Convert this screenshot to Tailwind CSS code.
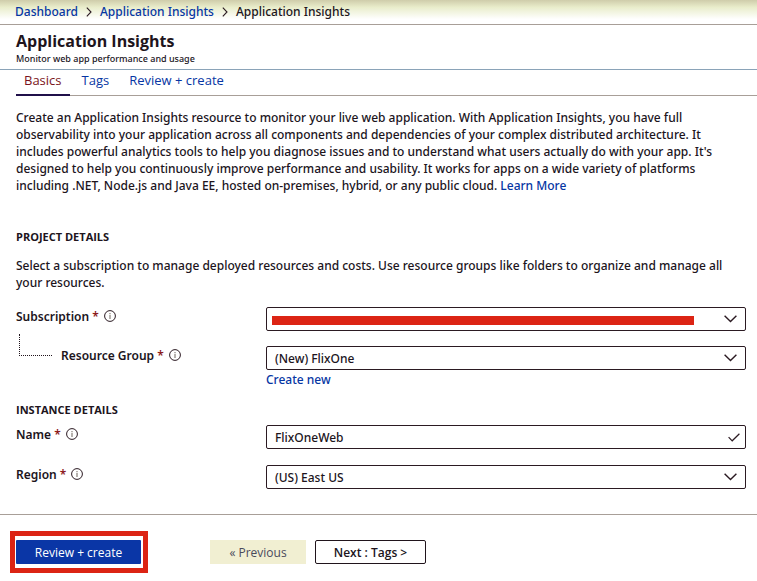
<!DOCTYPE html>
<html lang="en">
<head>
<meta charset="utf-8">
<meta name="viewport" content="width=device-width, initial-scale=1">
<title>Application Insights</title>
<script src="https://cdn.jsdelivr.net/npm/@tailwindcss/browser@4"></script>
</head>
<body class="min-h-screen bg-white font-['Noto_Sans','Open_Sans',sans-serif] text-[12px] leading-[17px] font-medium text-[#20141c]">
<svg class="hidden" aria-hidden="true">
  <symbol id="info" viewBox="0 0 12 12"><circle cx="6" cy="6" r="5.4" fill="none" stroke="#2b1a22" stroke-width="1"/><path d="M6 5v4M6 3v1.2" stroke="#8f8882" stroke-width="1.3"/></symbol>
  <symbol id="down" viewBox="0 0 13 8"><path d="M.6 .8 6.5 6.6 12.4 .8" fill="none" stroke="#2b1a22" stroke-width="1.4"/></symbol>
  <symbol id="crumb" viewBox="0 0 6 10"><path d="M.8 .6 5 5 .8 9.4" fill="none" stroke="#2b1a22" stroke-width="1.1"/></symbol>
  <symbol id="check" viewBox="0 0 12 9"><path d="M.6 4.2 4.2 7.8 11.4 .7" fill="none" stroke="#2b1a22" stroke-width="1.2"/></symbol>
</svg>

<nav aria-label="Breadcrumb" class="h-[25px] border-b border-[#a89f98] bg-linear-to-b from-[#cfccaa] via-[#e9edcb] via-30% to-white to-80% px-[15px]">
  <ol class="flex h-[23px] items-center gap-2">
    <li><a href="#" class="text-[#0636a3]">Dashboard</a></li>
    <li aria-hidden="true"><svg class="h-[10px] w-[6px]"><use href="#crumb"/></svg></li>
    <li><a href="#" class="text-[#0636a3]">Application Insights</a></li>
    <li aria-hidden="true"><svg class="h-[10px] w-[6px]"><use href="#crumb"/></svg></li>
    <li aria-current="page">Application Insights</li>
  </ol>
</nav>

<header class="h-[45px] border-b border-[#8aa3b8] px-4 pt-[5px]">
  <h1 class="font-['Open_Sans','Noto_Sans',sans-serif] text-[16px] leading-[22px] font-bold">Application Insights</h1>
  <p class="text-[9px] leading-[14px]">Monitor web app performance and usage</p>
</header>

<nav aria-label="Steps" class="ml-4 flex h-[26px] border-b border-[#a89f98] font-['Open_Sans','Noto_Sans',sans-serif] text-[13px] text-[#0636a3]">
  <a href="#" aria-current="page" class="h-[26px] border-b-2 border-[#20104a] px-2 pt-[2px] text-[#7a1420]">Basics</a>
  <a href="#" class="px-3 pt-[2px]">Tags</a>
  <a href="#" class="px-2 pt-[2px]">Review + create</a>
</nav>

<main class="pr-[11px] pl-4">
  <p class="mt-[13px] mr-5">Create an Application Insights resource to monitor your live web application. With Application Insights, you have full observability into your application across all components and dependencies of your complex distributed architecture. It includes powerful analytics tools to help you diagnose issues and to understand what users actually do with your app. It's designed to help you continuously improve performance and usability. It works for apps on a wide variety of platforms including .NET, Node.js and Java EE, hosted on-premises, hybrid, or any public cloud. <a href="#" class="text-[#0636a3]">Learn More</a></p>

  <h2 class="mt-[34px] font-['Open_Sans','Noto_Sans',sans-serif] text-[11px] font-bold">PROJECT DETAILS</h2>
  <p class="mt-3">Select a subscription to manage deployed resources and costs. Use resource groups like folders to organize and manage all your resources.</p>

  <div class="mt-4 grid grid-cols-[250px_1fr] gap-y-[15px]">
    <div class="flex h-[18px] items-center gap-[5px] font-semibold">
      <label for="subscription">Subscription <span class="text-[#8c1a1c]">*</span></label>
      <svg class="size-3" aria-hidden="true"><use href="#info"/></svg>
    </div>
    <div class="relative">
      <select id="subscription" class="block h-6 w-full appearance-none rounded-[2px] border border-[#2b1a22] bg-white px-2"><option></option></select>
      <span class="pointer-events-none absolute inset-y-0 right-[52px] left-[6px] my-auto h-[9px] translate-y-px bg-[#dc2414]"></span>
      <svg class="pointer-events-none absolute top-2 right-[9px] h-2 w-[13px]" aria-hidden="true"><use href="#down"/></svg>
    </div>

    <div class="flex font-semibold">
      <span class="-mt-3 ml-[3px] h-[22px] w-[33px] border-b border-l border-dotted border-[#20141c]"></span>
      <div class="ml-[9px] flex h-[18px] items-center gap-[5px]">
        <label for="group">Resource Group <span class="text-[#8c1a1c]">*</span></label>
        <svg class="size-3" aria-hidden="true"><use href="#info"/></svg>
      </div>
    </div>
    <div>
      <div class="relative">
        <select id="group" class="block h-6 w-full appearance-none rounded-[2px] border border-[#2b1a22] bg-white px-2"><option>(New) FlixOne</option></select>
        <svg class="pointer-events-none absolute top-2 right-[9px] h-2 w-[13px]" aria-hidden="true"><use href="#down"/></svg>
      </div>
      <a href="#" class="mt-px block text-[#0636a3]">Create new</a>
    </div>
  </div>

  <h2 class="mt-[13px] font-['Open_Sans','Noto_Sans',sans-serif] text-[11px] font-bold">INSTANCE DETAILS</h2>
  <div class="mt-[7px] grid grid-cols-[250px_1fr] gap-y-4">
    <div class="flex h-[18px] items-center gap-[5px] font-semibold">
      <label for="name">Name <span class="text-[#8c1a1c]">*</span></label>
      <svg class="size-3" aria-hidden="true"><use href="#info"/></svg>
    </div>
    <div class="relative">
      <input id="name" type="text" value="FlixOneWeb" class="block h-6 w-full rounded-[2px] border border-[#2b1a22] bg-white px-2">
      <svg class="pointer-events-none absolute top-2 right-[6px] h-[9px] w-3" aria-hidden="true"><use href="#check"/></svg>
    </div>
    <div class="flex h-[18px] items-center gap-[5px] font-semibold">
      <label for="region">Region <span class="text-[#8c1a1c]">*</span></label>
      <svg class="size-3" aria-hidden="true"><use href="#info"/></svg>
    </div>
    <div class="relative">
      <select id="region" class="block h-6 w-full appearance-none rounded-[2px] border border-[#2b1a22] bg-white px-2"><option>(US) East US</option></select>
      <svg class="pointer-events-none absolute top-2 right-[9px] h-2 w-[13px]" aria-hidden="true"><use href="#down"/></svg>
    </div>
  </div>
</main>

<footer class="mt-[25px] flex items-center border-t border-[#a89f98] px-[10px] py-4">
  <div class="border-5 border-[#dc2414] pt-1 pr-[2px] pb-1 pl-px">
    <button type="button" class="block h-6 w-[125px] rounded-[1px] bg-[#0a36a6] font-['Open_Sans','Noto_Sans',sans-serif] text-white">Review + create</button>
  </div>
  <button type="button" disabled class="ml-[62px] h-6 w-24 bg-[#f1efd2] font-['Open_Sans','Noto_Sans',sans-serif] text-[#4a4a5c]">« Previous</button>
  <button type="button" class="ml-[9px] h-6 w-[111px] rounded-[2px] border border-[#20141c] bg-white font-['Open_Sans','Noto_Sans',sans-serif] font-semibold">Next : Tags &gt;</button>
</footer>
</body>
</html>
